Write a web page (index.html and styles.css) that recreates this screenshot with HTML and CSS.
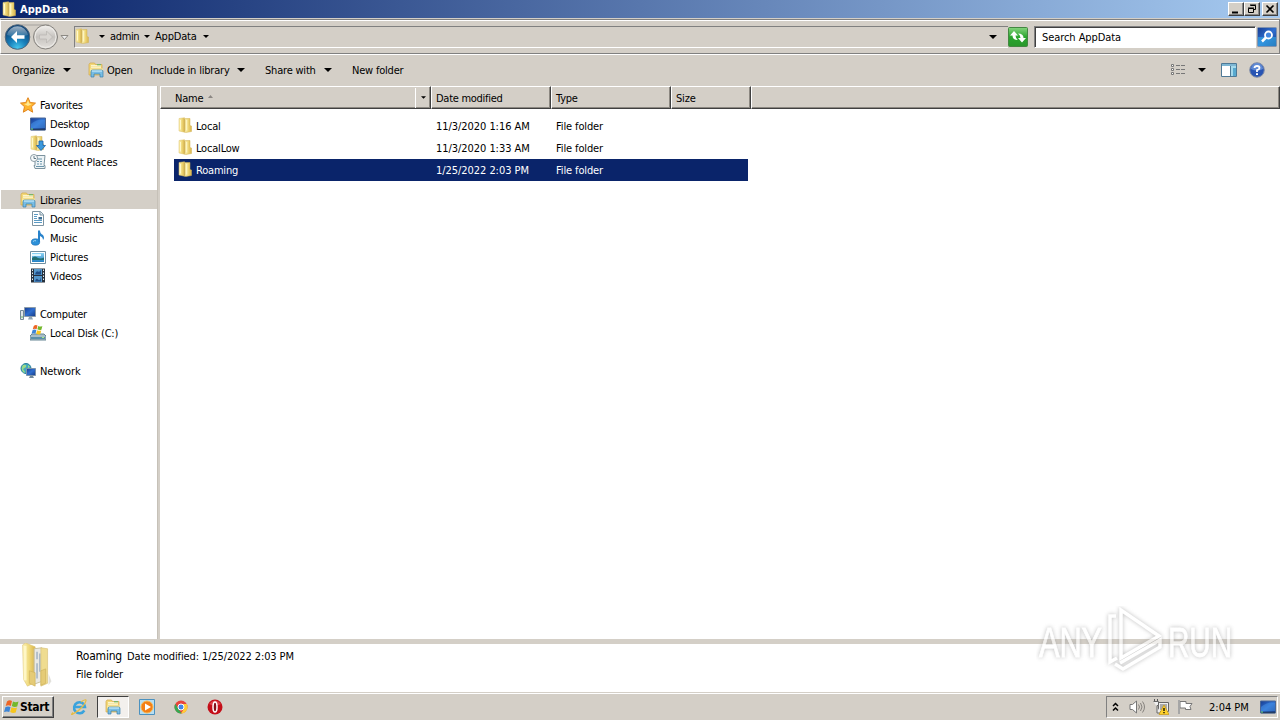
FILE: index.html
```html
<!DOCTYPE html>
<html lang="en">
<head>
  <meta charset="UTF-8" />
  <meta name="viewport" content="width=device-width, initial-scale=1.0" />
  <title>AppData</title>
  <link rel="stylesheet" href="styles.css">
</head>
<body>
<!-- icons used more than once -->
<svg class="defs">
  <defs>
    <linearGradient id="gold" x1="0" x2="1"><stop offset="0" stop-color="#fbf0b4"/><stop offset=".5" stop-color="#f0da7c"/><stop offset="1" stop-color="#d9b44c"/></linearGradient>
    <linearGradient id="blue" x1="0" y1="0" x2="1" y2="1"><stop offset="0" stop-color="#173c91"/><stop offset=".5" stop-color="#2f6fd0"/><stop offset="1" stop-color="#163a86"/></linearGradient>
    <linearGradient id="sky" x1="0" y1="0" x2="0" y2="1"><stop offset="0" stop-color="#8fd4f3"/><stop offset="1" stop-color="#2380c4"/></linearGradient>
    <linearGradient id="green" x1="0" y1="0" x2="0" y2="1"><stop offset="0" stop-color="#86d57f"/><stop offset=".5" stop-color="#2ba52e"/><stop offset="1" stop-color="#29972b"/></linearGradient>
    <radialGradient id="orb" cx=".5" cy=".95" r=".8"><stop offset="0" stop-color="#46c7ee"/><stop offset=".45" stop-color="#1880bb"/><stop offset="1" stop-color="#0e4578"/></radialGradient>
    <linearGradient id="gloss" x1="0" y1="0" x2="0" y2="1"><stop offset="0" stop-color="#fff" stop-opacity=".6"/><stop offset="1" stop-color="#fff" stop-opacity=".08"/></linearGradient>
    <linearGradient id="silver" x1="0" y1="0" x2="0" y2="1"><stop offset="0" stop-color="#f3f1ee"/><stop offset=".5" stop-color="#c5c2be"/><stop offset="1" stop-color="#e5e2de"/></linearGradient>
  </defs>
  <symbol id="folder" viewBox="0 0 16 16">
    <path d="M2 1.500 7.500.7v14.500L2 14z" fill="url(#gold)" stroke="#dcc069" stroke-width=".5"/>
    <path d="M7.500 1.500 13 1.500v7l1.500.5v5.500L9 15.500l-1.500-.3z" fill="url(#gold)" stroke="#d3b355" stroke-width=".5"/>
    <path d="M7.700 2v12.500" stroke="#c7a544" stroke-width=".7"/>
    <path d="M3.500 3v9.500M9.700 3v10.500" stroke="#fff8cc"/>
  </symbol>
  <symbol id="library" viewBox="0 0 16 16">
    <path d="M1 2.500 2 1h4.500l1 1.500H14V13H1z" fill="#f2d878" stroke="#d1a647" stroke-width=".7"/>
    <path d="M3 3.700h10M3 5.200h10" stroke="#fffbe0"/>
    <path d="M9 2.800h4" stroke="#54b56a"/>
    <path d="M2 6.500h13V10H2z" fill="#f9e79c"/>
    <path d="M3 15V9.500Q3 8 4.500 8h9Q15 8 15 9.500V15h-3v-3H6v3z" fill="#79bde3" stroke="#397fac" stroke-width=".7"/>
    <path d="M4 9h10" stroke="#d7f4ff"/>
  </symbol>
  <symbol id="desktop" viewBox="0 0 16 16">
    <path d="M.5 2h15v12H.5z" fill="url(#blue)" stroke="#4a6696"/>
    <path d="M1 8Q8 2 15 4v8H1z" fill="#4d9ced" opacity=".45"/>
    <path d="M1 13.500h14" stroke="#243e65" stroke-width="1.500"/><path d="M1 13h2" stroke="#70df78"/>
  </symbol>
  <symbol id="flag" viewBox="0 0 16 16">
    <path d="M3 2.500Q5.500.5 8 2L6.800 7Q4.500 5.700 1.700 7z" fill="#ee6524"/>
    <path d="M9 2.500Q11.500 4 14.500 2.500L13.200 7.500Q10.500 8.600 7.800 7z" fill="#74b82c"/>
    <path d="M1.500 8Q4 6.800 6.500 8l-1.200 5Q3 11.800 0 13z" fill="#3d85d6"/>
    <path d="M7.500 8.200Q10 9.700 13 8.500l-1.300 5Q9 14.700 6.200 13z" fill="#f6c51d"/>
  </symbol>
  <symbol id="down" viewBox="0 0 8 4"><path d="M0 0h8L4 4z"/></symbol>
</svg>

<div class="window">
  <div class="titlebar">
    <svg class="icon"><use href="#folder"/></svg>
    <span class="title">AppData</span>
    <div class="controls">
      <button class="control"><svg width="12" height="10"><path d="M2 7.500h6v2H2z"/></svg></button>
      <button class="control"><svg width="12" height="10"><path d="M4.500 1.500h5v4H8M4 1h6M2.500 4.500h5v4h-5zM2 4h6" fill="none" stroke="#000"/></svg></button>
      <button class="control close"><svg width="12" height="10"><path d="m2.500 1.500 7 7M9.500 1.500l-7 7" stroke="#000" stroke-width="1.600"/></svg></button>
    </div>
  </div>

  <div class="navbar">
    <svg class="travel" viewBox="0 0 66 28">
      <path d="M14 2h31" stroke="#777" opacity=".5"/>
      <circle cx="13.500" cy="14" r="12.300" fill="url(#orb)" stroke="#52667a"/>
      <path d="M3 12A10.700 10.700 0 0 1 24 12Q13.500 16 3 12z" fill="url(#gloss)"/>
      <path d="m13 8-6 6 6 6v-4.200h7.500v-3.600H13z" fill="#fff"/>
      <circle cx="41.500" cy="14" r="12" fill="url(#silver)" stroke="#85827d"/>
      <circle cx="41.500" cy="14" r="10.500" fill="none" stroke="#eeece8"/>
      <path d="m42.500 8 6 6-6 6v-4h-7v-4h7z" fill="#d8d5d1" stroke="#b9b6b1" stroke-width=".7"/>
      <path d="M57 12.500h7l-3.500 4z" fill="#eee" stroke="#8c8983"/>
    </svg>
    <div class="address">
      <svg class="icon"><use href="#folder"/></svg>
      <svg class="crumb-arrow"><use href="#down"/></svg>
      <span class="admin">admin</span>
      <svg class="crumb-arrow"><use href="#down"/></svg>
      <span class="appdata">AppData</span>
      <svg class="crumb-arrow"><use href="#down"/></svg>
      <svg class="history"><use href="#down"/></svg>
    </div>
    <svg class="refresh" viewBox="0 0 20 20">
      <rect x=".5" y=".5" width="19" height="19" rx="1" fill="url(#green)" stroke="#438741"/>
      <path d="M2 8.500 6 4l4 4.500H7.500q0 3 2.500 4.500Q4.500 13 4.500 8.500zM18 11l-4 4.500L10 11h2.500Q12.500 8 10 6.500q5.500 0 5.500 4.500z" fill="#fff"/>
    </svg>
    <div class="search">Search AppData</div>
    <svg class="search-button" viewBox="0 0 20 20">
      <rect x=".5" y=".5" width="19" height="19" rx="1" fill="url(#blue)" stroke="#8193ae"/>
      <path d="M1 10h18v9H1z" fill="#36b4ed" opacity=".55"/>
      <circle cx="11.500" cy="8" r="3.500" fill="#4286df" stroke="#fff" stroke-width="1.800"/>
      <path d="m9 10.500-4 4" stroke="#fff" stroke-width="2.500"/>
    </svg>
  </div>

  <div class="toolbar">
    <div class="tool organize"><span>Organize</span><svg class="arrow"><use href="#down"/></svg></div>
    <div class="tool open"><svg class="icon"><use href="#library"/></svg><span>Open</span></div>
    <div class="tool include"><span>Include in library</span><svg class="arrow"><use href="#down"/></svg></div>
    <div class="tool share"><span>Share with</span><svg class="arrow"><use href="#down"/></svg></div>
    <div class="tool new-folder"><span>New folder</span></div>
    <div class="views">
      <svg width="16" height="14"><path d="M1.500 1.500h2v2h-2zM1.500 5.500h2v2h-2zM1.500 9.500h2v2h-2z" fill="#fff" stroke="#777"/><path d="M6 2.500h4m1 0h4M6 6.500h4m1 0h4M6 10.500h4m1 0h4" stroke="#777"/></svg>
      <svg class="arrow"><use href="#down"/></svg>
      <svg class="preview" width="16" height="14"><path d="M.5.500h15v13H.500z" fill="#fff" stroke="#4e7996"/><path d="M1 2h14" stroke="#7db6d3" stroke-width="2"/><path d="M10 3h5v10h-5z" fill="#a4d9ec"/><path d="M12 5h3v8h-3z" fill="#57a9cf"/><path d="M9.500 3v10" stroke="#4e7996"/></svg>
      <svg class="help" width="16" height="16"><circle cx="8" cy="8" r="7.300" fill="#2854b3" stroke="#8490a9"/><path d="M2 7a6 6 0 0 1 12 0q-6 3-12 0" fill="#8cb4ef" opacity=".55"/><path d="M5.500 6Q5.500 4 8 4t2.500 2Q10.500 7.300 8 8.200V10" fill="none" stroke="#fff" stroke-width="1.800"/><path d="M7 11.200h2v1.800H7z" fill="#fff"/></svg>
    </div>
  </div>

  <div class="main">
    <div class="sidebar">
      <div class="item"><svg class="icon" viewBox="0 0 16 16"><path d="m8 .7 2.200 4.800 5.300.6-4 3.600 1.200 5.500L8 12.400l-4.700 2.800 1.200-5.500-4-3.600 5.300-.6z" fill="#ffb52e" stroke="#e18620"/><path d="m8 3 1.300 3.500L12 7 8 9 4 7l2.700-.5z" fill="#ffe992"/></svg><span>Favorites</span></div>
      <div class="item child"><svg class="icon"><use href="#desktop"/></svg><span>Desktop</span></div>
      <div class="item child"><svg class="icon" viewBox="0 0 16 16"><use href="#folder" x="-1" width="16" height="16"/><path d="M9 6h4v4.500h2.500L11 15.500 6.500 10.500H9z" fill="#3b98dc" stroke="#1c62a7" stroke-width=".8"/></svg><span>Downloads</span></div>
      <div class="item child"><svg class="icon" viewBox="0 0 16 16"><path d="M5 1.500h10l-1 10h1v3H5l-1-3h1z" fill="#edf3f6" stroke="#7b929e"/><path d="M7 5h5M7 7.500h2m1 0h2M7 10h2m1 0h2M6 12.500h8" stroke="#6b95ab"/><circle cx="4" cy="4" r="3.500" fill="#f7fbfc" stroke="#8b9ba4"/><path d="M4 2v2.500h2" fill="none" stroke="#607783"/></svg><span class="recent">Recent Places</span></div>

      <div class="item group active"><svg class="icon"><use href="#library"/></svg><span>Libraries</span></div>
      <div class="item child"><svg class="icon" viewBox="0 0 16 16"><path d="M2.500 .5h8l3 3v11h-11z" fill="#fff" stroke="#7d93a1"/><path d="M10 .5v3.500h3.500" fill="#dce8ef" stroke="#7d93a1"/><path d="M4 3.500h4M4 5.500h3M4 7.500h3M4 9.500h8M4 11.500h8" stroke="#5b9ac4"/><path d="M8.500 6h3.500v2.500H8.500z" fill="#3d6f94"/></svg><span class="documents">Documents</span></div>
      <div class="item child"><svg class="icon" viewBox="0 0 16 16"><ellipse cx="5.500" cy="12" rx="4.200" ry="3.200" fill="#2d91d9" stroke="#1667ad" stroke-width=".6"/><path d="M8 .5h2q0 3 3 4.500Q15 8 13 10q0-3-3-4v6H8z" fill="#2782cb"/><path d="M3 11.500q1-1 3-.8" stroke="#9fdbff"/></svg><span>Music</span></div>
      <div class="item child"><svg class="icon" viewBox="0 0 16 16"><path d="M.5 2.500h15v12H.500z" fill="#fff" stroke="#718fa1"/><path d="M2 4h12v9H2z" fill="url(#sky)"/><path d="M2 9q3-3 6 0 3 1 6-.5V11H2z" fill="#226f72"/><path d="M2 6h9" stroke="#dff6ff" stroke-width="2"/></svg><span class="pictures">Pictures</span></div>
      <div class="item child"><svg class="icon" viewBox="0 0 16 16"><path d="M1 .5h14v14H1z" fill="#27313d"/><path d="M4 1h8v6H4zM4 8h8v6H4z" fill="#5396cb"/><path d="M5 6.500q1-4 3-3t3-2v5zM5 13.500q1-4 3-2t3-2v4z" fill="#204c85"/><path d="M2.500 1.500v12M13.500 1.500v12" stroke="#e3edf2" stroke-dasharray="1.500 1.500"/></svg><span>Videos</span></div>

      <div class="item group"><svg class="icon" viewBox="0 0 16 16"><path d="M.5 4.500h3v9h-3z" fill="#e0e6e9" stroke="#748997"/><path d="M1 11h2" stroke="#6eb65d"/><path d="M4.500 1.500h11v9h-11z" fill="url(#blue)" stroke="#8b9ba9"/><path d="M9 11h3l1 2.500H8z" fill="#91a5b4"/></svg><span class="computer">Computer</span></div>
      <div class="item child"><svg class="icon" viewBox="0 0 16 16"><path d="m2 9-2 2v4h16v-4l-2-2z" fill="#a8bdc8" stroke="#668693"/><path d="M1 12h14v2H1z" fill="#5b8fa8"/><path d="M12 12.500h2" stroke="#a8ef80"/><use href="#flag" x="1" y="-1" width="13" height="12"/></svg><span>Local Disk (C:)</span></div>

      <div class="item group"><svg class="icon" viewBox="0 0 16 16"><circle cx="6" cy="5.500" r="5" fill="#42a8bd" stroke="#267d9b"/><path d="M3 2q4-1 3 2L3 6l2 3-1 1Q0 6 3 2M8 2l2 2-2 1z" fill="#9bdb88"/><path d="M6.500 5.500h9v7h-9z" fill="url(#blue)" stroke="#7d93a9"/><path d="M10 13h3l1 2H9z" fill="#73899a"/></svg><span class="recent">Network</span></div>
    </div>

    <div class="files">
      <div class="columns">
        <div class="column name">Name<svg class="sort" viewBox="0 0 5 3"><path d="M0 3h5L2.500 0z" fill="#8b8783"/></svg><div class="filter"><svg><use href="#down"/></svg></div></div>
        <div class="column date">Date modified</div>
        <div class="column type">Type</div>
        <div class="column size">Size</div>
        <div class="column rest"></div>
      </div>
      <div class="rows">
        <div class="row"><svg class="icon"><use href="#folder"/></svg><span class="file">Local</span><span class="when">11/3/2020 1:16 AM</span><span class="kind">File folder</span></div>
        <div class="row"><svg class="icon"><use href="#folder"/></svg><span class="file">LocalLow</span><span class="when">11/3/2020 1:33 AM</span><span class="kind">File folder</span></div>
        <div class="row selected"><svg class="icon"><use href="#folder"/></svg><span class="file">Roaming</span><span class="when">1/25/2022 2:03 PM</span><span class="kind">File folder</span></div>
      </div>
    </div>
  </div>

  <div class="details">
    <svg class="big-folder" viewBox="0 0 36 48">
      <path d="m2 2 3-2 10 4v37l-8 4-4-7z" fill="url(#gold)" stroke="#e0c777" stroke-width=".7"/>
      <path d="m14 6 8-1v35l-8 3z" fill="#e9e9e4" stroke="#c5bfa0"/>
      <path d="M17 9v8M20 11v19M17 21v16" stroke="#9fb0c0" stroke-width="1.500"/>
      <path d="m21 5 7 1v36l-7 3z" fill="#efdc90" stroke="#d8c27a" stroke-width=".7"/>
      <path d="M9 29l6 2v14l-6-3zM21 29l5-2v15l-5 2z" fill="#e5cb76" stroke="#cfb25b" stroke-width=".7"/>
      <path d="M4.500 3v36" stroke="#fff7c6" stroke-width="3"/><path d="m29 32 3 8-3 4" fill="#c5c3b9" opacity=".5"/>
    </svg>
    <div class="info">
      <div><span class="info-name">Roaming</span><span class="info-date">Date modified: 1/25/2022 2:03 PM</span></div>
      <div><span class="kind">File folder</span></div>
    </div>
  </div>
</div>

<div class="taskbar">
  <button class="start"><svg class="icon"><use href="#flag"/></svg><span>Start</span></button>
  <div class="launch">
    <svg class="icon" viewBox="0 0 16 16"><path d="M13.300 11.500A5.500 5.500 0 1 1 14 8H4" fill="none" stroke="#3aa3dd" stroke-width="2.500"/><path d="M2 13.500Q-1 17 2 15 8 12 12.500 6.500 17-.5 13.500 1 12 1.300 10 3" fill="none" stroke="#e6bc43" stroke-width="1.200"/></svg>
    <div class="task-active"><svg class="icon"><use href="#library"/></svg></div>
    <svg class="icon" viewBox="0 0 16 16"><path d="M.5.500h15v15H.500z" fill="#b7def2" stroke="#4b91bf"/><circle cx="8" cy="8" r="6" fill="#f47f15" stroke="#fbb64d"/><path d="M6 4.500v7L12 8z" fill="#fff"/></svg>
    <svg class="icon chrome" viewBox="0 0 16 16"><circle cx="8" cy="8" r="6.500" fill="#e8453c"/><path d="M2.400 4.700 6 11l3 3.400A6.500 6.500 0 0 1 2.400 4.700" fill="#36a853"/><path d="M8 5h5.800A6.500 6.500 0 0 1 8 14.500l3-5z" fill="#ffcd37"/><circle cx="8" cy="8" r="3" fill="#4285e8" stroke="#fff"/></svg>
    <svg class="icon opera" viewBox="0 0 16 16"><circle cx="8" cy="8" r="7.500" fill="#c40e18"/><path d="M2 5q6-7 12 0-6 3-12 0" fill="#ef6268" opacity=".6"/><ellipse cx="8" cy="8" rx="2" ry="5" fill="#851018" stroke="#fff" stroke-width="1.500"/></svg>
  </div>
  <div class="tray">
    <svg class="chevrons" width="7" height="10"><path d="m1 4 2.500-2.500L6 4M1 8.500 3.500 6 6 8.500" fill="none" stroke="#000" stroke-width="1.500"/></svg>
    <svg class="icon" viewBox="0 0 16 16"><path d="M1 5.500h2.500L7.500 2v12l-4-3.500H1z" fill="#fff" stroke="#777"/><path d="M9.500 5.500q2 2.500 0 5M11.500 4q3 4 0 8M13.500 2.500q4 5.500 0 11" fill="none" stroke="#85817d"/></svg>
    <svg class="icon" viewBox="0 0 16 16"><path d="M5.500 3.500h10v9h-10z" fill="#eee" stroke="#666"/><path d="M7 5h7v6H7z" fill="#aaa"/><path d="M1.500 0v3M4.500 0v3" stroke="#555"/><path d="M.5 2.500h5v4H4v7.500H8" fill="#eee" stroke="#666"/><path d="m11 6 5 9.500H6z" fill="#ffd22b" stroke="#c69612" stroke-width=".7"/><path d="M11 9v3m0 1v1.200" stroke="#000" stroke-width="1.300"/></svg>
    <svg class="icon" viewBox="0 0 16 16"><path d="M2 1v14" stroke="#777" stroke-width="2"/><path d="M3 2.500h6v2h6l-2 3 1 3H8.500v-1.500H3z" fill="#fff" stroke="#777"/><path d="M2 1v14" stroke="#fff" stroke-width=".7"/></svg>
    <span class="clock">2:04 PM</span>
    <svg class="icon"><use href="#desktop"/></svg>
  </div>
</div>

<svg class="watermark" viewBox="0 0 240 70">
  <g class="mark">
    <text x="3" y="51" textLength="63" lengthAdjust="spacingAndGlyphs">ANY</text>
    <text x="132" y="51" textLength="64" lengthAdjust="spacingAndGlyphs">RUN</text>
    <path d="M80 10h-6v46l7-4M85 4v48l38-22zM79 58l8 5 37-22v-7L84 57"/>
  </g>
</svg>
</body>
</html>
```

FILE: styles.css
```css
* {
  box-sizing: border-box;
}

body {
  margin: 0;
  width: 1280px;
  height: 720px;
  overflow: hidden;
  background: #d4cfc7;
  color: #000;
  font-family: "DejaVu Sans Condensed", "DejaVu Sans", sans-serif;
  font-stretch: condensed;
  font-size: 11px;
  letter-spacing: -0.2px;
  line-height: 14px;
  white-space: nowrap;
}

svg {
  display: block;
  flex: none;
}

.defs {
  position: absolute;
  width: 0;
  height: 0;
}

.icon {
  width: 16px;
  height: 16px;
}

.window {
  height: 692px;
  display: flex;
  flex-direction: column;
}

.titlebar {
  height: 18px;
  flex: none;
  display: flex;
  align-items: center;
  padding: 0 2px 0 1px;
  background: linear-gradient(90deg, #0a246a, #a6caf0);
  color: #fff;
  font-weight: bold;
}

.title {
  margin-left: 3px;
  padding-top: 1px;
  letter-spacing: 0.05px;
}

.controls {
  display: flex;
  margin-left: auto;
}

.control {
  width: 16px;
  height: 14px;
  padding: 0 1px;
  background: #d4cfc7;
  border: 1px solid;
  border-color: #fff #404040 #404040 #fff;
  box-shadow: inset -1px -1px #888;
}

.close {
  margin-left: 2px;
}

.navbar {
  height: 35px;
  flex: none;
  display: flex;
  align-items: center;
  margin-top: 1px;
  padding: 1px 1px 0 3px;
  border: 1px solid #808080;
  border-left-color: #fff;
  box-shadow: inset 0 1px #fff, 0 1px #fff;
}

.travel {
  width: 66px;
  height: 28px;
}

.address {
  width: 934px;
  height: 22px;
  display: flex;
  align-items: center;
  margin-left: 4px;
  border: 1px solid #808080;
  border-right: 0;
  border-bottom-color: #fff;
}

.crumb-arrow {
  width: 6px;
  height: 3px;
  margin-top: -1px;
}

.address .icon {
  margin: -2px 9px 0 -1px;
}

.admin {
  width: 28px;
  margin: 0 6px 0 5px;
  letter-spacing: -0.35px;
}

.appdata {
  width: 42px;
  margin: 0 6px 0 5px;
}

.history {
  width: 8px;
  height: 4px;
  margin: 0 11px 0 auto;
}

.refresh {
  width: 20px;
  height: 20px;
}

.search {
  width: 222px;
  height: 22px;
  margin-left: 6px;
  padding: 4px 7px;
  background: #fff;
  border: 1px solid;
  border-color: #808080 #fff #fff #808080;
  box-shadow: inset 1px 1px #404040;
  letter-spacing: -0.07px;
}

.search-button {
  width: 20px;
  height: 20px;
  margin-left: 1px;
}

.toolbar {
  height: 32px;
  flex: none;
  display: flex;
  align-items: center;
  padding-left: 12px;
}

.tool,
.views {
  display: flex;
  align-items: center;
}

.tool span {
  padding-top: 2px;
}

.arrow {
  width: 8px;
  height: 4px;
}

.organize {
  width: 76px;
}

.organize span {
  width: 51px;
}

.open {
  width: 62px;
}

.open .icon {
  margin-right: 3px;
}

.include {
  width: 115px;
}

.include span {
  width: 87px;
}

.share {
  width: 87px;
}

.share span {
  width: 59px;
}

.views {
  margin: 0 15px 0 auto;
}

.views .arrow {
  margin: 0 15px 0 12px;
}

.help {
  margin-left: 12px;
}

.main {
  flex: 1;
  display: flex;
  min-height: 0;
}

.sidebar {
  width: 158px;
  flex: none;
  padding-top: 9px;
  background: #fff;
  border-right: 1px solid #c6c1b8;
}

.item {
  height: 19px;
  display: flex;
  align-items: center;
  gap: 4px;
  padding-left: 20px;
}

.item span {
  padding-top: 2px;
}

.child {
  padding-left: 30px;
}

.group {
  margin-top: 19px;
}

.active {
  background: #d4cfc7;
  margin-left: 1px;
  padding-left: 19px;
}

.recent,
.pictures {
  letter-spacing: -0.1px;
}

.documents,
.computer {
  letter-spacing: -0.3px;
}

.files {
  flex: 1;
  margin-left: 2px;
  background: #fff;
}

.columns {
  height: 23px;
  display: flex;
}

.column {
  display: flex;
  align-items: center;
  padding: 2px 0 0 4px;
  background: #d4cfc7;
  border: 1px solid;
  border-color: #fff #404040 #404040 #fff;
  box-shadow: inset -1px -1px #8c8881;
}

.name {
  width: 271px;
  padding-left: 14px;
}

.date,
.type {
  width: 120px;
}

.date {
  letter-spacing: -0.28px;
}

.size {
  width: 80px;
}

.rest {
  flex: 1;
}

.sort {
  width: 5px;
  height: 3px;
  margin: -5px 0 0 5px;
}

.filter {
  width: 15px;
  height: 20px;
  display: flex;
  align-items: center;
  justify-content: center;
  margin: -2px 0 0 auto;
  border-left: 1px solid #fff;
}

.filter svg {
  width: 5px;
  height: 3px;
}

.rows {
  padding: 6px 0 0 14px;
}

.row {
  width: 574px;
  height: 22px;
  display: flex;
  align-items: center;
  padding-left: 3px;
}

.row .icon {
  margin-top: -2px;
}

.row span {
  padding-top: 1px;
}

.row .file {
  width: 243px;
  padding-left: 3px;
}

.when {
  width: 120px;
  letter-spacing: -0.05px;
}

.kind {
  letter-spacing: -0.12px;
}

.selected {
  background: #0a246a;
  color: #fff;
}

.details {
  height: 53px;
  flex: none;
  display: flex;
  background: #fff;
  border-top: 5px solid #d4cfc7;
}

.big-folder {
  width: 36px;
  height: 46px;
  margin: -1px 0 0 20px;
}

.info {
  margin: 3px 0 0 20px;
  line-height: 18px;
}

.info-name {
  display: inline-block;
  width: 51px;
  font-size: 12px;
}

.info-date {
  letter-spacing: -0.11px;
}

.taskbar {
  height: 28px;
  display: flex;
  align-items: center;
  padding: 1px 2px 0;
  border-top: 1px solid #d4cfc7;
  box-shadow: inset 0 1px #fff;
}

.start {
  width: 52px;
  height: 22px;
  display: flex;
  align-items: center;
  padding: 0 0 0 1px;
  background: #d4cfc7;
  border: 1px solid;
  border-color: #fff #404040 #404040 #fff;
  box-shadow: inset -1px -1px #808080;
  color: #000;
  font: bold 12px "DejaVu Sans Condensed", sans-serif;
  letter-spacing: -0.35px;
}

.launch {
  display: flex;
  align-items: center;
  margin-left: 17px;
}

.task-active {
  width: 32px;
  height: 22px;
  display: flex;
  align-items: center;
  justify-content: center;
  margin: 0 10px;
  background: #f3f0ed;
  border: 1px solid;
  border-color: #404040 #fff #fff #404040;
}

.chrome {
  margin: 0 18px;
}

.tray {
  width: 172px;
  height: 22px;
  display: flex;
  align-items: center;
  gap: 8px;
  margin-left: auto;
  padding-left: 5px;
  border: 1px solid;
  border-color: #808080 #fff #fff #808080;
}

.tray .chevrons {
  margin-right: 2px;
}

.clock {
  width: 43px;
  margin-left: 8px;
  padding-top: 1px;
  letter-spacing: 0;
}

/* translucent mark over the file area */
.watermark {
  position: absolute;
  left: 1036px;
  top: 606px;
  width: 240px;
  height: 70px;
}

.mark {
  fill: none;
  stroke: #fff;
  stroke-width: 3.5;
  opacity: 0.65;
  filter: drop-shadow(0 0 2px #999);
}

.mark text {
  fill: #fff;
  stroke: #fff;
  stroke-width: 0.8px;
  font: 42px "Liberation Sans", sans-serif;
}
```
